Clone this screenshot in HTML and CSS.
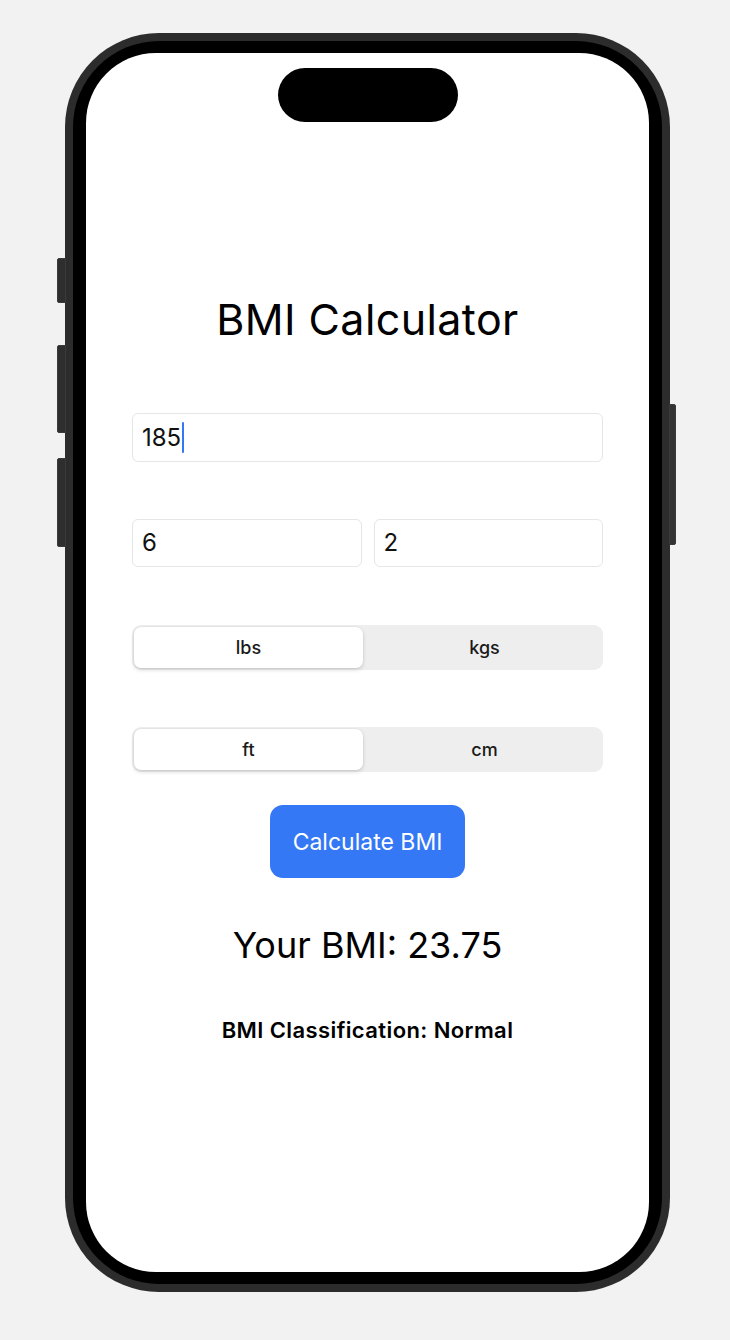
FILE: index.html
```html
<!DOCTYPE html>
<html lang="en">
<head>
<meta charset="utf-8">
<title>BMI Calculator</title>
<link rel="stylesheet" href="styles.css">
</head>
<body>
<div class="page">
  <div class="phone">
    <span class="side-btn side-btn--action"></span>
    <span class="side-btn side-btn--vol-up"></span>
    <span class="side-btn side-btn--vol-down"></span>
    <span class="side-btn side-btn--power"></span>
    <div class="bezel">
      <div class="screen">
        <div class="island"></div>
        <main class="app">
          <h1 class="title">BMI Calculator</h1>
          <div class="field field--full"><span class="field-text">185</span><span class="caret"></span></div>
          <div class="field-row">
            <div class="field"><span class="field-text">6</span></div>
            <div class="field"><span class="field-text">2</span></div>
          </div>
          <div class="segmented">
            <div class="segment segment--active">lbs</div>
            <div class="segment">kgs</div>
          </div>
          <div class="segmented segmented--second">
            <div class="segment segment--active">ft</div>
            <div class="segment">cm</div>
          </div>
          <button class="calc-btn" type="button">Calculate BMI</button>
          <p class="result">Your BMI: 23.75</p>
          <p class="classification">BMI Classification: Normal</p>
        </main>
      </div>
    </div>
  </div>
</div>
</body>
</html>
```
FILE: styles.css
```css
* { box-sizing: border-box; }

html, body {
  margin: 0;
  padding: 0;
  background: #f2f2f2;
  font-family: "Inter", "Liberation Sans", sans-serif;
  color: #000;
}

.page {
  width: 730px;
  height: 1340px;
  padding: 33px 0 0 65px;
}

.phone {
  position: relative;
  width: 605px;
  height: 1259px;
  padding: 8px;
  background: #2c2c2c;
  border-radius: 94px;
}

.side-btn {
  position: absolute;
  background: #2e2e2e;
  border: 1px solid #3a3a3a;
}

.side-btn--action   { left: -8px; top: 225px; width: 9px; height: 45px; border-radius: 2px 0 0 2px; }
.side-btn--vol-up   { left: -8px; top: 312px; width: 9px; height: 88px; border-radius: 2px 0 0 2px; }
.side-btn--vol-down { left: -8px; top: 425px; width: 9px; height: 89px; border-radius: 2px 0 0 2px; }
.side-btn--power    { right: -6px; top: 371px; width: 7px; height: 141px; border-radius: 0 2px 2px 0; background: #333; }

.bezel {
  width: 100%;
  height: 100%;
  padding: 12px 13px;
  background: #000;
  border-radius: 86px;
}

.screen {
  position: relative;
  width: 100%;
  height: 100%;
  background: #fff;
  border-radius: 70px;
  overflow: hidden;
}

.island {
  position: absolute;
  top: 15px;
  left: 50%;
  width: 180px;
  height: 54px;
  margin-left: -90px;
  background: #000;
  border-radius: 27px;
}

.app {
  display: flex;
  flex-direction: column;
  align-items: stretch;
  padding: 241px 46px 0 46px;
}

.title {
  margin: 0;
  font-size: 43px;
  line-height: 50px;
  font-weight: 400;
  text-align: center;
  letter-spacing: 0.4px;
}

.field {
  display: flex;
  align-items: center;
  height: 49px;
  padding-left: 9px;
  border: 1px solid #e6e6e6;
  border-radius: 6px;
  background: #fff;
}

.field--full { margin-top: 69px; }

.field-text {
  font-size: 24px;
  line-height: 30px;
  color: #111;
}

.caret {
  display: block;
  width: 2px;
  height: 31px;
  margin-left: 1px;
  background: #3478f6;
  border-radius: 1px;
}

.field-row {
  display: grid;
  grid-template-columns: 1fr 1fr;
  gap: 12px;
  margin-top: 57px;
}

.field-row .field { height: 48px; }

.segmented {
  display: grid;
  grid-template-columns: 229px 1fr;
  height: 45px;
  margin-top: 58px;
  padding: 2px 0 2px 2px;
  background: #eeeeef;
  border-radius: 9px;
}

.segmented--second { margin-top: 57px; }

.segment {
  display: flex;
  align-items: center;
  justify-content: center;
  font-size: 18px;
  font-weight: 500;
  color: #1a1a1a;
}

.segment--active {
  background: #fff;
  border-radius: 7px;
  box-shadow: 0 2px 4px rgba(0, 0, 0, 0.14), 0 0 0 0.5px rgba(0, 0, 0, 0.05);
}

.segment + .segment { padding-left: 3px; }

.calc-btn {
  align-self: center;
  width: 195px;
  height: 73px;
  margin-top: 33px;
  padding: 0;
  border: none;
  border-radius: 13px;
  background: #3478f6;
  color: #fff;
  font-family: inherit;
  font-size: 23px;
  font-weight: 400;
}

.result {
  margin: 45px 0 0 0;
  font-size: 36px;
  line-height: 44px;
  text-align: center;
}

.classification {
  margin: 50px 0 0 0;
  font-size: 22px;
  line-height: 26px;
  font-weight: 600;
  letter-spacing: 0.4px;
  text-align: center;
}
```
